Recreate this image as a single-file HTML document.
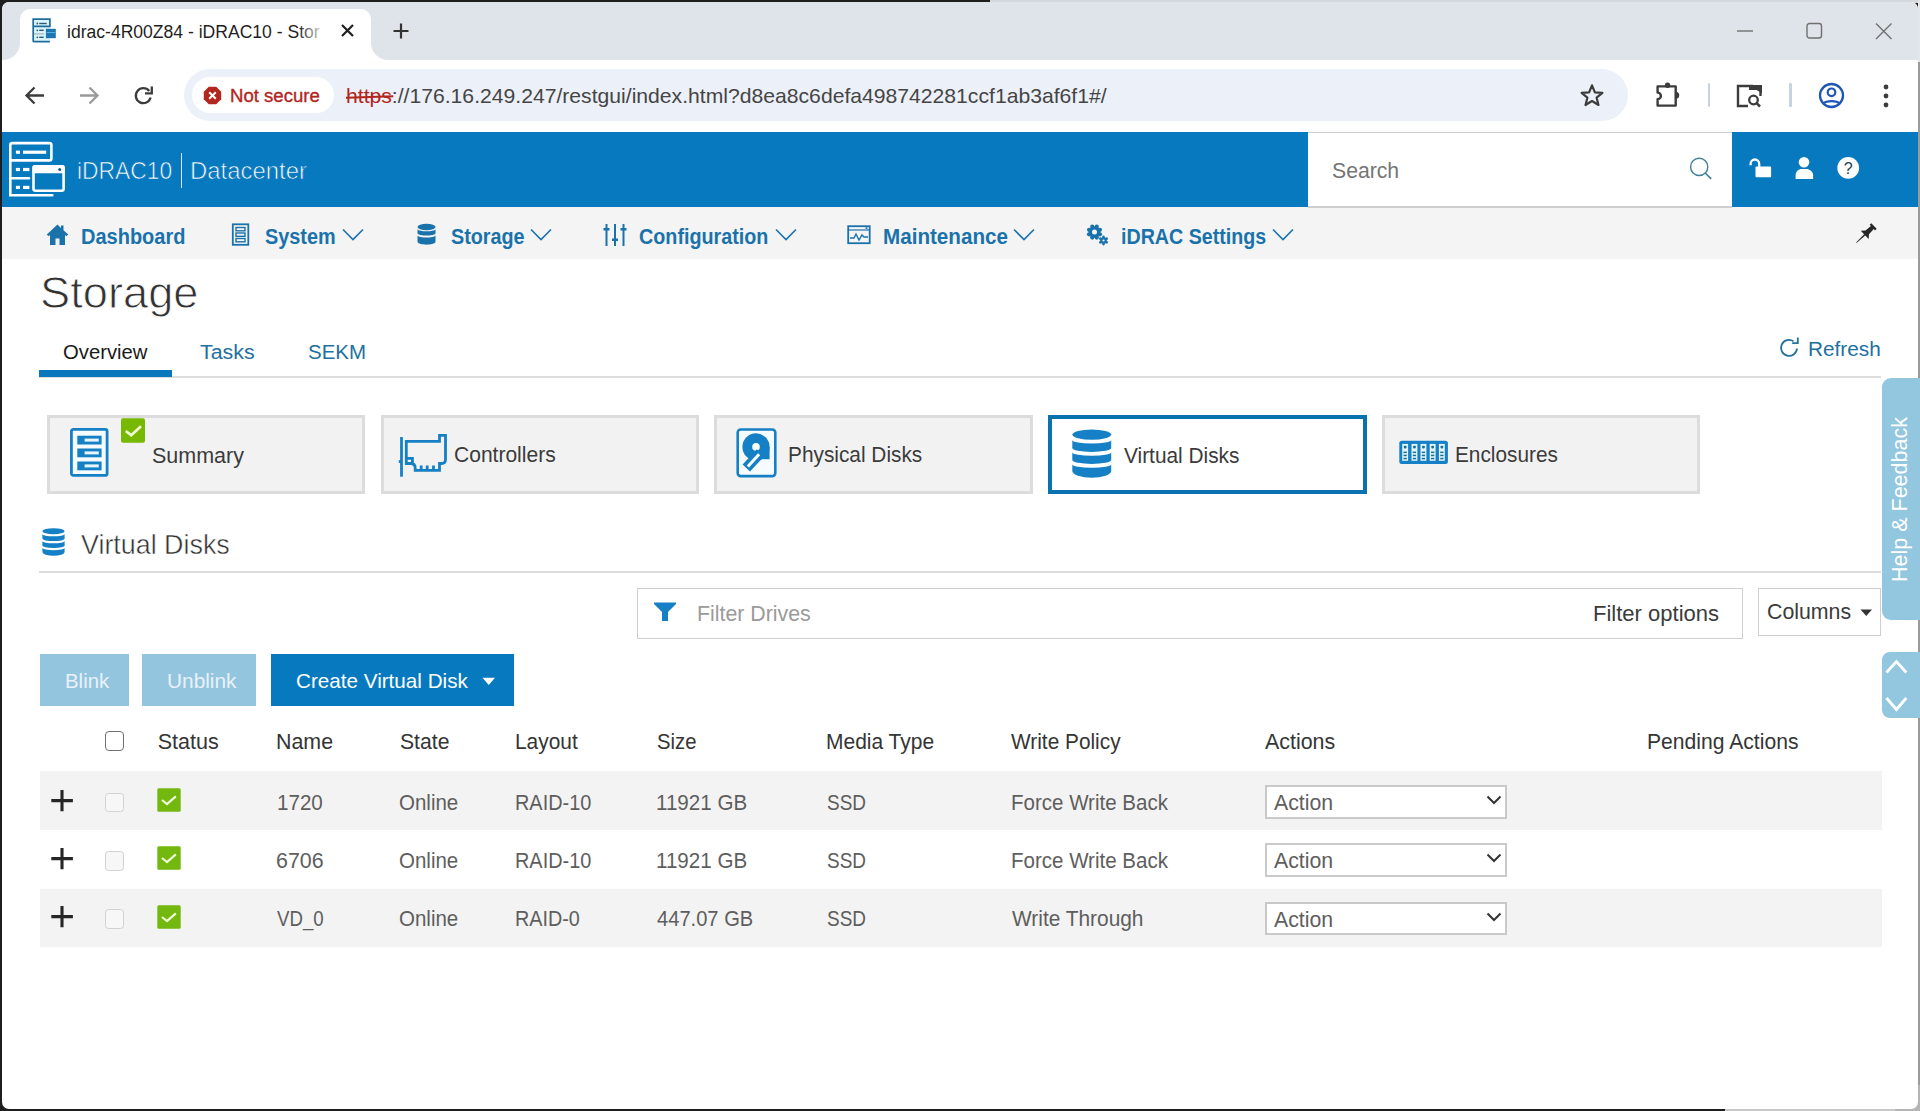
<!DOCTYPE html>
<html><head><meta charset="utf-8">
<style>
*{box-sizing:border-box;margin:0;padding:0}
html,body{width:1920px;height:1111px;overflow:hidden;background:#2a2a2a;font-family:"Liberation Sans",sans-serif}
.a{position:absolute}
.t{position:absolute;white-space:pre;transform-origin:0 0;font-family:"Liberation Sans",sans-serif}
svg{position:absolute;overflow:visible}
</style></head><body>
<!-- desktop bg -->
<div class="a" style="left:0;top:0;width:1920px;height:1111px;background:#1e1e1e"></div>
<div class="a" style="left:990px;top:0;width:930px;height:3px;background:#d5d8dd"></div>
<div class="a" style="left:1918px;top:0;width:2px;height:62px;background:#e4e6ea"></div>
<div class="a" style="left:1918px;top:62px;width:2px;height:1049px;background:#9a9a9a"></div>
<div class="a" style="left:1725px;top:1109px;width:195px;height:2px;background:#c8c8c8"></div>
<div class="a" style="left:1895px;top:1085px;width:25px;height:26px;background:#b4b4b4"></div>
<!-- window -->
<div class="a" style="left:2px;top:2px;width:1916px;height:1107px;background:#fff;border-radius:7px;overflow:hidden">
  <div class="a" style="left:0;top:0;width:1916px;height:58px;background:#dfe3ea"></div>
</div>
<!-- tab -->
<svg style="left:0;top:0" width="400" height="62" viewBox="0 0 400 62"><path d="M3 60A17 17 0 0 0 20 43V19A10 10 0 0 1 30 9H361A10 10 0 0 1 371 19V43A17 17 0 0 0 388 60Z" fill="#fff"/></svg>
<div class="a" style="left:298px;top:18px;width:34px;height:30px;z-index:5;background:linear-gradient(90deg,rgba(255,255,255,0) 0%,rgba(255,255,255,0.55) 45%,#fff 100%)"></div>
<!-- favicon -->
<svg style="left:28px;top:14px" width="32" height="32" viewBox="0 0 32 32">
  <rect x="5" y="5" width="17" height="22.6" fill="#dcf3fa"/>
  <path d="M5.2 27.7V5.2H21.9V12.4H5.2M5.2 27.7H21.9" fill="none" stroke="#1c6d9c" stroke-width="1.7"/>
  <path d="M6 19.9H16" stroke="#9cb7c2" stroke-width="1.2"/>
  <g fill="#2b5c72"><circle cx="9.3" cy="9.5" r="0.9"/><rect x="11.2" y="8.8" width="7.5" height="1.4"/><circle cx="9.3" cy="16.3" r="0.9"/><rect x="11.2" y="15.6" width="4.5" height="1.4"/><circle cx="9.3" cy="23.3" r="0.9"/><rect x="11.2" y="22.6" width="4.5" height="1.4"/></g>
  <rect x="17.9" y="14.8" width="9.9" height="9.4" fill="#1a78b5"/><rect x="18.5" y="18" width="8.7" height="0.9" fill="#62b8e0"/>
</svg>
<!-- tab close & new tab -->
<svg style="left:340px;top:23px" width="15" height="15" viewBox="0 0 15 15"><path d="M2 2L13 13M13 2L2 13" stroke="#1f1f1f" stroke-width="2.2"/></svg>
<svg style="left:392px;top:22px" width="18" height="18" viewBox="0 0 18 18"><path d="M9 1.5V16.5M1.5 9H16.5" stroke="#333" stroke-width="2.2"/></svg>
<!-- window controls -->
<svg style="left:1736px;top:22px" width="20" height="20" viewBox="0 0 20 20"><path d="M1 9H17" stroke="#707070" stroke-width="1.4"/></svg>
<svg style="left:1806px;top:22px" width="18" height="18" viewBox="0 0 18 18"><rect x="1" y="1.5" width="14.5" height="14.5" rx="2.5" fill="none" stroke="#707070" stroke-width="1.4"/></svg>
<svg style="left:1875px;top:22px" width="18" height="18" viewBox="0 0 18 18"><path d="M1 1.5L16.5 17M16.5 1.5L1 17" stroke="#707070" stroke-width="1.4"/></svg>
<!-- toolbar -->
<svg style="left:24px;top:85px" width="22" height="21" viewBox="0 0 22 21"><path d="M20 10.5H3M10.5 2.5L2.5 10.5L10.5 18.5" fill="none" stroke="#3c3c3c" stroke-width="2.3"/></svg>
<svg style="left:78px;top:85px" width="22" height="21" viewBox="0 0 22 21"><path d="M2 10.5H19M11.5 2.5L19.5 10.5L11.5 18.5" fill="none" stroke="#9a9a9a" stroke-width="2.3"/></svg>
<svg style="left:133px;top:85px" width="22" height="22" viewBox="0 0 22 22"><path d="M17.6 12.5A7.5 7.5 0 1 1 16.2 6" fill="none" stroke="#3c3c3c" stroke-width="2.3"/><path d="M18.8 1.5V8.3H12" fill="none" stroke="#3c3c3c" stroke-width="2.3"/></svg>
<div class="a" style="left:184px;top:69px;width:1444px;height:52px;background:#ecf0f8;border-radius:26px"></div>
<div class="a" style="left:192px;top:77px;width:142px;height:36px;background:#fff;border-radius:18px"></div>
<svg style="left:203px;top:86px" width="19" height="19" viewBox="0 0 19 19"><path d="M5.8 0.8H13.2L18.2 5.8V13.2L13.2 18.2H5.8L0.8 13.2V5.8Z" fill="#b3261e"/><path d="M6.2 6.2L12.8 12.8M12.8 6.2L6.2 12.8" stroke="#fff" stroke-width="2"/></svg>
<div class="t" style="left:346px;top:85px;font-size:21px;line-height:21px;color:#454545;transform:scaleX(1.0068);"><span style="color:#b3261e;position:relative">https<span style="position:absolute;left:0px;right:-1px;top:12px;height:1.6px;background:#b3261e;transform:rotate(-2deg)"></span></span>://176.16.249.247/restgui/index.html?d8ea8c6defa498742281ccf1ab3af6f1#/</div>
<svg style="left:1579px;top:83px" width="26" height="25" viewBox="0 0 26 25"><path d="M13 2.3L15.9 9.4L23.4 9.9L17.6 14.7L19.5 22L13 18L6.5 22L8.4 14.7L2.6 9.9L10.1 9.4Z" fill="none" stroke="#3c3c3c" stroke-width="2.2" stroke-linejoin="round"/></svg>
<svg style="left:1654px;top:80px" width="30" height="30" viewBox="0 0 30 30"><path d="M3.6 6.4H21.7V25.6H3.6V19.2A3.3 3.3 0 0 0 3.6 12.6Z" fill="none" stroke="#3c3c3c" stroke-width="2.4" stroke-linejoin="round"/><circle cx="13.6" cy="5.2" r="2.7" fill="#3c3c3c"/><path d="M21.7 12.5A2.8 2.8 0 0 1 21.7 18.1Z" fill="#3c3c3c" stroke="#3c3c3c" stroke-width="1.5"/></svg>
<div class="a" style="left:1707.5px;top:83px;width:2.5px;height:24px;background:#c8d3e2;border-radius:1px"></div>
<svg style="left:1735px;top:84px" width="30" height="25" viewBox="0 0 30 25"><path d="M18 2H3V22H13" fill="none" stroke="#3c3c3c" stroke-width="2.4"/><path d="M14 1.5H26.5V9" fill="#3c3c3c" stroke="#3c3c3c" stroke-width="1"/><rect x="14" y="1" width="13" height="5" fill="#3c3c3c"/><line x1="25.5" y1="7" x2="25.5" y2="12" stroke="#3c3c3c" stroke-width="2.4"/><circle cx="18.5" cy="16" r="4.3" fill="none" stroke="#3c3c3c" stroke-width="2.3"/><path d="M21.6 19.1L25 22.5" stroke="#3c3c3c" stroke-width="2.5"/></svg>
<div class="a" style="left:1789px;top:83px;width:2.5px;height:24px;background:#c8d3e2;border-radius:1px"></div>
<svg style="left:1818px;top:82px" width="27" height="27" viewBox="0 0 27 27"><circle cx="13.5" cy="13.5" r="11.5" fill="none" stroke="#1f57b5" stroke-width="2.3"/><circle cx="13.5" cy="10.3" r="3.8" fill="none" stroke="#1f57b5" stroke-width="2.2"/><path d="M5.8 21.5C8 18.3 19 18.3 21.2 21.5" fill="none" stroke="#1f57b5" stroke-width="2.2"/></svg>
<svg style="left:1880px;top:83px" width="12" height="26" viewBox="0 0 12 26"><circle cx="6" cy="4" r="2.4" fill="#3c3c3c"/><circle cx="6" cy="13" r="2.4" fill="#3c3c3c"/><circle cx="6" cy="22" r="2.4" fill="#3c3c3c"/></svg>

<!-- iDRAC header -->
<div class="a" style="left:2px;top:132px;width:1916px;height:75px;background:#0779bf"></div>
<div class="a" style="left:1308px;top:131.5px;width:424px;height:76px;background:#fff;border-top:1.5px solid #cfcfcf;border-bottom:1.5px solid #cfcfcf"></div>
<svg style="left:8px;top:140px" width="60" height="60" viewBox="0 0 60 60">
  <g fill="none" stroke="#fff" stroke-width="2.6" stroke-linecap="round">
    <rect x="2.3" y="3.1" width="41.1" height="17.3" rx="2"/>
    <path d="M2.3 20V55.2H44.3"/>
    <path d="M2.3 38.2H21"/>
    <rect x="25.5" y="26.4" width="30.1" height="24.3" rx="2"/>
  </g>
  <g fill="#fff">
    <rect x="7.9" y="10.6" width="4.1" height="3.2"/><rect x="15" y="10.6" width="23.2" height="3.2"/>
    <rect x="7.9" y="27.9" width="4.1" height="3.2"/><rect x="15" y="27.9" width="6.4" height="3.2"/>
    <rect x="7.9" y="45.8" width="4.1" height="3.2"/><rect x="15" y="45.8" width="6.4" height="3.2"/>
    <rect x="24.5" y="25.2" width="32.2" height="8.1" rx="1.5"/>
  </g>
  <circle cx="51.7" cy="29.4" r="1.5" fill="#16608c"/>
</svg>
<div class="a" style="left:180.5px;top:153px;width:1.5px;height:35px;background:#d6e8f4"></div>
<svg style="left:1680px;top:145px" width="200" height="50" viewBox="0 0 200 50">
<circle cx="19.2" cy="21.9" r="8.6" fill="none" stroke="#3f7f97" stroke-width="1.4"/><path d="M25.3 28L31.2 33.9" stroke="#3f7f97" stroke-width="1.6"/>
<path d="M70.6 20.2V18.8A4.3 4.3 0 0 1 79.2 18.8V22" fill="none" stroke="#fff" stroke-width="2.3"/><rect x="75.5" y="21.4" width="15.6" height="10.9" rx="1" fill="#fff"/>
<circle cx="124" cy="17.2" r="5.3" fill="#fff"/><path d="M115.6 33.9V30.5C115.6 26.5 118.5 24 121.5 24H126.5C129.5 24 133.1 26.5 133.1 30.5V33.9Z" fill="#fff"/>
<circle cx="168.2" cy="22.9" r="10.9" fill="#fff"/><text x="168.2" y="29" text-anchor="middle" font-family="Liberation Sans" font-size="16" fill="#243c55">?</text>
</svg>
<!-- nav -->
<div class="a" style="left:2px;top:207px;width:1916px;height:52px;background:#f4f4f4"></div>
<div class="a" style="left:1308px;top:206px;width:424px;height:1.5px;background:#cfcfcf"></div>
<svg style="left:46px;top:223px" width="23" height="23" viewBox="0 0 23 23"><path d="M11.5 1.5L0.8 11.5L2.5 13.2L4 11.9V22H9.5V15.5H13.5V22H19V11.9L20.5 13.2L22.2 11.5L17.5 7.2V2.5H15V4.9Z" fill="#1a72ab"/></svg>
<svg style="left:231px;top:223px" width="20" height="23" viewBox="0 0 20 23"><rect x="1.8" y="1.3" width="15.5" height="20.5" fill="none" stroke="#1a72ab" stroke-width="1.8"/><rect x="5" y="4.5" width="9" height="3.3" fill="none" stroke="#1a72ab" stroke-width="1.4"/><rect x="5" y="10" width="9" height="3.3" fill="none" stroke="#1a72ab" stroke-width="1.4"/><rect x="5" y="15.5" width="9" height="3.3" fill="none" stroke="#1a72ab" stroke-width="1.4"/></svg>
<svg style="left:416px;top:223px" width="21" height="23" viewBox="0 0 21 23"><g fill="#1a72ab"><ellipse cx="10.5" cy="4" rx="9" ry="3.3"/><path d="M1.5 6.3C3 9 18 9 19.5 6.3V10.5C18 13.3 3 13.3 1.5 10.5Z"/><path d="M1.5 12.5C3 15.3 18 15.3 19.5 12.5V19C18 22.5 3 22.5 1.5 19Z"/></g></svg>
<svg style="left:603px;top:223px" width="24" height="24" viewBox="0 0 24 24"><g stroke="#1a72ab" stroke-width="2" fill="#1a72ab"><path d="M3.5 1V23M12 1V23M20.5 1V23" fill="none"/><rect x="0.5" y="5" width="6" height="2.5" stroke="none"/><rect x="9" y="15.5" width="6" height="2.5" stroke="none"/><rect x="17.5" y="5" width="6" height="2.5" stroke="none"/></g></svg>
<svg style="left:847px;top:225px" width="24" height="20" viewBox="0 0 24 20"><rect x="1.2" y="1.2" width="21.5" height="17" fill="none" stroke="#1a72ab" stroke-width="1.8"/><path d="M1.2 5H22.7" stroke="#1a72ab" stroke-width="1.2"/><path d="M3 13L7 13L9 9L12 15L15 10L17 12L21 12" fill="none" stroke="#1a72ab" stroke-width="1.4"/><rect x="18.5" y="2.3" width="2" height="1.6" fill="#1a72ab"/></svg>
<svg style="left:1086px;top:223px" width="24" height="24" viewBox="0 0 24 24"><g fill="#1a72ab"><circle cx="8.5" cy="9.1" r="5.9"/><circle cx="13.95" cy="11.36" r="2.1"/><circle cx="10.76" cy="14.55" r="2.1"/><circle cx="6.24" cy="14.55" r="2.1"/><circle cx="3.05" cy="11.36" r="2.1"/><circle cx="3.05" cy="6.84" r="2.1"/><circle cx="6.24" cy="3.65" r="2.1"/><circle cx="10.76" cy="3.65" r="2.1"/><circle cx="13.95" cy="6.84" r="2.1"/><circle cx="17.5" cy="17.5" r="3.3"/><circle cx="20.62" cy="19.30" r="1.35"/><circle cx="17.50" cy="21.10" r="1.35"/><circle cx="14.38" cy="19.30" r="1.35"/><circle cx="14.38" cy="15.70" r="1.35"/><circle cx="17.50" cy="13.90" r="1.35"/><circle cx="20.62" cy="15.70" r="1.35"/></g><circle cx="8.5" cy="9.1" r="2.5" fill="#f4f4f4"/><circle cx="17.5" cy="17.5" r="1.1" fill="#f4f4f4"/></svg>
<svg style="left:342px;top:228px" width="22" height="13" viewBox="0 0 22 13"><path d="M1 1.5L11 11.5L21 1.5" fill="none" stroke="#1a72ab" stroke-width="1.6"/></svg>
<svg style="left:530px;top:228px" width="22" height="13" viewBox="0 0 22 13"><path d="M1 1.5L11 11.5L21 1.5" fill="none" stroke="#1a72ab" stroke-width="1.6"/></svg>
<svg style="left:775px;top:228px" width="22" height="13" viewBox="0 0 22 13"><path d="M1 1.5L11 11.5L21 1.5" fill="none" stroke="#1a72ab" stroke-width="1.6"/></svg>
<svg style="left:1012.5px;top:228px" width="22" height="13" viewBox="0 0 22 13"><path d="M1 1.5L11 11.5L21 1.5" fill="none" stroke="#1a72ab" stroke-width="1.6"/></svg>
<svg style="left:1272px;top:228px" width="22" height="13" viewBox="0 0 22 13"><path d="M1 1.5L11 11.5L21 1.5" fill="none" stroke="#1a72ab" stroke-width="1.6"/></svg>
<svg style="left:1845px;top:210px" width="40" height="40" viewBox="0 0 40 40"><g transform="translate(29 16) rotate(46.5)" fill="#262626"><path d="M-3.9 0H3.9V2.3H2.1L2.5 9.3L5.7 12.8H-5.7L-2.5 9.3L-2.1 2.3H-3.9Z"/><path d="M-0.85 12.5H0.85L0.25 24.4H-0.25Z"/></g></svg>

<!-- page header -->
<div class="a" style="left:39px;top:376px;width:1842px;height:1.5px;background:#dcdcdc"></div>
<div class="a" style="left:39px;top:370px;width:133px;height:7px;background:#0a76bb"></div>
<svg style="left:1778px;top:337px" width="22" height="20" viewBox="0 0 22 20"><path d="M19 11.5A8 8 0 1 1 15.5 4.3" fill="none" stroke="#22709f" stroke-width="1.8"/><path d="M19.8 0.6V6.2H14.2" fill="none" stroke="#22709f" stroke-width="1.8"/></svg>

<!-- cards -->
<div class="a" style="left:47px;top:415px;width:318px;height:79px;background:#f2f2f2;border:3px solid #dcdcdc"></div>
<div class="a" style="left:380.5px;top:415px;width:318px;height:79px;background:#f2f2f2;border:3px solid #dcdcdc"></div>
<div class="a" style="left:713.5px;top:415px;width:319px;height:79px;background:#f2f2f2;border:3px solid #dcdcdc"></div>
<div class="a" style="left:1047.5px;top:415px;width:319px;height:79px;background:#fff;border:4.6px solid #0b72b0"></div>
<div class="a" style="left:1381.5px;top:415px;width:318px;height:79px;background:#f2f2f2;border:3px solid #dcdcdc"></div>
<!-- summary icon -->
<svg style="left:70px;top:427.5px" width="39" height="49" viewBox="0 0 39 49"><rect x="1.4" y="1.4" width="35.7" height="46" rx="2" fill="#f6fbfd" stroke="#1580c5" stroke-width="2.8"/><g fill="#1580c5"><rect x="7.3" y="7.7" width="24.3" height="8.8"/><rect x="7.3" y="20.5" width="24.3" height="8.8"/><rect x="7.3" y="33.5" width="24.3" height="8.8"/></g><g fill="#e6f6fc"><rect x="14.6" y="10.6" width="14.2" height="3"/><rect x="14.6" y="23.4" width="14.2" height="3"/><rect x="14.6" y="36.4" width="14.2" height="3"/></g></svg>
<svg style="left:121px;top:418px" width="24" height="25" viewBox="0 0 24 25"><rect x="0" y="0.2" width="24" height="24.5" rx="2" fill="#76b900"/><path d="M4.8 13L10.2 17.2L20 8.3" fill="none" stroke="#f4ffd8" stroke-width="2.6"/></svg>
<!-- controllers icon -->
<svg style="left:395px;top:430px" width="56" height="50" viewBox="0 0 56 50"><g fill="none" stroke="#1580c5" stroke-width="2.8"><path d="M6.5 7V46.7"/><path d="M3.8 31.6H6.5"/><path d="M11.3 11.4H44.5V5.4H50.5V29.5Q50.5 33.5 46.5 33.5H44.5V40.4H20.2V38Q20.2 33.5 15.7 33.5H11.3Z"/><path d="M11.3 28.4H17.4V33.5"/><path d="M26.2 35.5V40.4M32.2 35.5V40.4M38.5 35.5V40.4"/></g></svg>
<!-- physical disk icon -->
<svg style="left:735px;top:427px" width="42" height="51" viewBox="0 0 42 51"><rect x="2.7" y="2.5" width="37.6" height="46.6" rx="3" fill="#f6fbfd" stroke="#1580c5" stroke-width="2.6"/><g fill="#1580c5"><circle cx="21" cy="19.9" r="13.6"/><rect x="21" y="19.9" width="13.6" height="12.3"/></g><circle cx="21" cy="19.9" r="3.8" fill="#f6fbfd"/><g transform="translate(11.3 41.1) rotate(-47)"><rect x="0" y="-5.1" width="21" height="10.2" fill="#1580c5"/><rect x="2.3" y="-1.5" width="16.5" height="3" fill="#f6fbfd"/></g></svg>
<!-- virtual disk icon (card) -->
<svg style="left:1072px;top:429px" width="40" height="50" viewBox="0 0 40 50"><g fill="#1580c5"><ellipse cx="19.75" cy="5.6" rx="19.4" ry="5.2"/><path d="M0.3 10.9A19.45 3.6 0 0 0 39.2 10.9V19A19.45 3.9 0 0 1 0.3 19Z"/><path d="M0.3 23.2A19.45 3.6 0 0 0 39.2 23.2V31A19.45 3.9 0 0 1 0.3 31Z"/><path d="M0.3 35.2A19.45 3.6 0 0 0 39.2 35.2V41.9A19.45 6.8 0 0 1 0.3 41.9Z"/></g></svg>
<!-- enclosure icon -->
<svg style="left:1398px;top:440px" width="51" height="25" viewBox="0 0 51 25"><rect x="1.3" y="0.8" width="48.6" height="23.1" rx="2.5" fill="#1580c5"/><rect x="4.2" y="3.9" width="5.9" height="16.9" fill="#e2f4fb"/><rect x="5.800000000000001" y="5.8" width="2.7" height="2.6" rx="0.8" fill="#1b6f90"/><rect x="5.5" y="11.6" width="3.3" height="1.5" fill="#1b6f90"/><rect x="5.5" y="14.7" width="3.3" height="1.5" fill="#1b6f90"/><rect x="5.5" y="17.8" width="3.3" height="1.5" fill="#1b6f90"/><rect x="13.5" y="3.9" width="5.9" height="16.9" fill="#e2f4fb"/><rect x="15.1" y="5.8" width="2.7" height="2.6" rx="0.8" fill="#1b6f90"/><rect x="14.8" y="11.6" width="3.3" height="1.5" fill="#1b6f90"/><rect x="14.8" y="14.7" width="3.3" height="1.5" fill="#1b6f90"/><rect x="14.8" y="17.8" width="3.3" height="1.5" fill="#1b6f90"/><rect x="22.5" y="3.9" width="5.9" height="16.9" fill="#e2f4fb"/><rect x="24.1" y="5.8" width="2.7" height="2.6" rx="0.8" fill="#1b6f90"/><rect x="23.8" y="11.6" width="3.3" height="1.5" fill="#1b6f90"/><rect x="23.8" y="14.7" width="3.3" height="1.5" fill="#1b6f90"/><rect x="23.8" y="17.8" width="3.3" height="1.5" fill="#1b6f90"/><rect x="31.7" y="3.9" width="5.9" height="16.9" fill="#e2f4fb"/><rect x="33.3" y="5.8" width="2.7" height="2.6" rx="0.8" fill="#1b6f90"/><rect x="33.0" y="11.6" width="3.3" height="1.5" fill="#1b6f90"/><rect x="33.0" y="14.7" width="3.3" height="1.5" fill="#1b6f90"/><rect x="33.0" y="17.8" width="3.3" height="1.5" fill="#1b6f90"/><rect x="40.9" y="3.9" width="5.9" height="16.9" fill="#e2f4fb"/><rect x="42.5" y="5.8" width="2.7" height="2.6" rx="0.8" fill="#1b6f90"/><rect x="42.199999999999996" y="11.6" width="3.3" height="1.5" fill="#1b6f90"/><rect x="42.199999999999996" y="14.7" width="3.3" height="1.5" fill="#1b6f90"/><rect x="42.199999999999996" y="17.8" width="3.3" height="1.5" fill="#1b6f90"/></svg>

<!-- section header -->
<svg style="left:41.9px;top:528px" width="23" height="28" viewBox="0 0 39.5 49"><g fill="#1580c5"><ellipse cx="19.75" cy="5.6" rx="19.4" ry="5.2"/><path d="M0.3 10.9A19.45 3.6 0 0 0 39.2 10.9V19A19.45 3.9 0 0 1 0.3 19Z"/><path d="M0.3 23.2A19.45 3.6 0 0 0 39.2 23.2V31A19.45 3.9 0 0 1 0.3 31Z"/><path d="M0.3 35.2A19.45 3.6 0 0 0 39.2 35.2V41.9A19.45 6.8 0 0 1 0.3 41.9Z"/></g></svg>
<div class="a" style="left:39px;top:571px;width:1842px;height:1.5px;background:#dcdcdc"></div>

<!-- filter -->
<div class="a" style="left:637px;top:587.5px;width:1105.5px;height:51px;background:#fff;border:1.5px solid #cfcfcf"></div>
<svg style="left:653px;top:601px" width="24" height="21" viewBox="0 0 24 21"><path d="M1 1.5H23V3L15 11V20H9V11L1 3Z" fill="#1580c5"/></svg>
<div class="a" style="left:1758px;top:588px;width:123px;height:47.5px;background:#fff;border:1.5px solid #cfcfcf"></div>
<svg style="left:1860px;top:609px" width="13" height="8" viewBox="0 0 13 8"><path d="M0.5 0.5H12L6.25 7Z" fill="#333"/></svg>

<!-- buttons -->
<div class="a" style="left:39.5px;top:654px;width:89px;height:51.5px;background:#93c5df"></div>
<div class="a" style="left:142px;top:654px;width:113.5px;height:51.5px;background:#93c5df"></div>
<div class="a" style="left:270.5px;top:654px;width:243.5px;height:51.5px;background:#0779bf"></div>
<svg style="left:482px;top:677px" width="14" height="9" viewBox="0 0 14 9"><path d="M0.5 0.8H13L6.75 8Z" fill="#fff"/></svg>

<!-- table -->
<div class="a" style="left:104.5px;top:731px;width:19.6px;height:19.8px;border:1.7px solid #707070;border-radius:4px;background:#fff"></div>
<div class="a" style="left:39.5px;top:770.5px;width:1842px;height:59.5px;background:#f3f3f3"></div>
<div class="a" style="left:39.5px;top:888.5px;width:1842px;height:58px;background:#f3f3f3"></div>
<!-- row widgets -->
<div id="rows"></div>
<svg style="left:51px;top:789.6px" width="23" height="23" viewBox="0 0 23 23"><path d="M11 0V21.3M0.3 10.6H21.9" stroke="#262626" stroke-width="3.1"/></svg>
<div class="a" style="left:104.5px;top:792.7px;width:19.5px;height:19.5px;border:1.6px solid #d2d2d2;border-radius:3.5px;background:#f7f7f7"></div>
<svg style="left:157px;top:788.0px" width="24" height="24" viewBox="0 0 24 24"><rect x="0.3" y="0.3" width="23.4" height="23.4" rx="1.5" fill="#72b80e"/><path d="M5 12L10 16L18.8 8.3" fill="none" stroke="#f0ffd8" stroke-width="2.2"/></svg>
<div class="a" style="left:1265px;top:785.0px;width:242px;height:33.5px;border:2px solid #c9c9c9;background:#fff"></div>
<svg style="left:1486px;top:795.0px" width="16" height="10" viewBox="0 0 16 10"><path d="M1.5 1.5L8 8L14.5 1.5" fill="none" stroke="#333" stroke-width="2"/></svg>
<svg style="left:51px;top:847.9px" width="23" height="23" viewBox="0 0 23 23"><path d="M11 0V21.3M0.3 10.6H21.9" stroke="#262626" stroke-width="3.1"/></svg>
<div class="a" style="left:104.5px;top:851.0px;width:19.5px;height:19.5px;border:1.6px solid #d2d2d2;border-radius:3.5px;background:#f7f7f7"></div>
<svg style="left:157px;top:846.3px" width="24" height="24" viewBox="0 0 24 24"><rect x="0.3" y="0.3" width="23.4" height="23.4" rx="1.5" fill="#72b80e"/><path d="M5 12L10 16L18.8 8.3" fill="none" stroke="#f0ffd8" stroke-width="2.2"/></svg>
<div class="a" style="left:1265px;top:843.3px;width:242px;height:33.5px;border:2px solid #c9c9c9;background:#fff"></div>
<svg style="left:1486px;top:853.3px" width="16" height="10" viewBox="0 0 16 10"><path d="M1.5 1.5L8 8L14.5 1.5" fill="none" stroke="#333" stroke-width="2"/></svg>
<svg style="left:51px;top:906.3px" width="23" height="23" viewBox="0 0 23 23"><path d="M11 0V21.3M0.3 10.6H21.9" stroke="#262626" stroke-width="3.1"/></svg>
<div class="a" style="left:104.5px;top:909.4px;width:19.5px;height:19.5px;border:1.6px solid #d2d2d2;border-radius:3.5px;background:#f7f7f7"></div>
<svg style="left:157px;top:904.7px" width="24" height="24" viewBox="0 0 24 24"><rect x="0.3" y="0.3" width="23.4" height="23.4" rx="1.5" fill="#72b80e"/><path d="M5 12L10 16L18.8 8.3" fill="none" stroke="#f0ffd8" stroke-width="2.2"/></svg>
<div class="a" style="left:1265px;top:901.7px;width:242px;height:33.5px;border:2px solid #c9c9c9;background:#fff"></div>
<svg style="left:1486px;top:911.7px" width="16" height="10" viewBox="0 0 16 10"><path d="M1.5 1.5L8 8L14.5 1.5" fill="none" stroke="#333" stroke-width="2"/></svg>

<!-- help & feedback -->
<div class="a" style="left:1881.5px;top:378px;width:40px;height:242px;background:#93c6df;border-radius:9px 0 0 9px"></div>
<div class="t" style="left:1889.5px;top:582px;font-size:21.5px;line-height:21.5px;color:#fff;transform:rotate(-90deg) scaleX(1.0);">Help &amp; Feedback</div>
<div class="a" style="left:1881.5px;top:652px;width:40px;height:66.3px;background:#93c6df;border-radius:8px 0 0 8px"></div>
<svg style="left:1880px;top:655px" width="30" height="60" viewBox="0 0 30 60"><path d="M6.5 17.5L16.4 6.5L26.3 17.5M6.5 43L16.4 54.5L26.3 43" fill="none" stroke="#fff" stroke-width="2.8"/></svg>
<!-- right window edge -->


<div class="t" style="left:67.32px;top:22.76px;font-size:18px;line-height:18px;color:#1f1f1f;transform:scaleX(0.9752);">idrac-4R00Z84 - iDRAC10 - Stor</div>
<div class="t" style="left:229.94px;top:88.39px;font-size:17.5px;line-height:17.5px;color:#b3261e;transform:scaleX(1.0617);-webkit-text-stroke:0.35px #b3261e;">Not secure</div>
<div class="t" style="left:77.05px;top:158.68px;font-size:24px;line-height:24px;color:#ffffff;transform:scaleX(0.9525);-webkit-text-stroke:0.7px #0779bf;">iDRAC10</div>
<div class="t" style="left:190.00px;top:158.68px;font-size:24px;line-height:24px;color:#ffffff;transform:scaleX(0.9965);-webkit-text-stroke:0.7px #0779bf;">Datacenter</div>
<div class="t" style="left:1331.74px;top:159.68px;font-size:22px;line-height:22px;color:#757575;transform:scaleX(0.9634);">Search</div>
<div class="t" style="left:81.09px;top:225.78px;font-size:22px;line-height:22px;color:#1a72ab;font-weight:700;transform:scaleX(0.9087);">Dashboard</div>
<div class="t" style="left:265.00px;top:225.78px;font-size:22px;line-height:22px;color:#1a72ab;font-weight:700;transform:scaleX(0.9034);">System</div>
<div class="t" style="left:450.60px;top:225.78px;font-size:22px;line-height:22px;color:#1a72ab;font-weight:700;transform:scaleX(0.8987);">Storage</div>
<div class="t" style="left:639.00px;top:225.78px;font-size:22px;line-height:22px;color:#1a72ab;font-weight:700;transform:scaleX(0.8974);">Configuration</div>
<div class="t" style="left:882.56px;top:225.78px;font-size:22px;line-height:22px;color:#1a72ab;font-weight:700;transform:scaleX(0.9377);">Maintenance</div>
<div class="t" style="left:1121.11px;top:225.78px;font-size:22px;line-height:22px;color:#1a72ab;font-weight:700;transform:scaleX(0.8926);">iDRAC Settings</div>
<div class="t" style="left:39.59px;top:270.41px;font-size:45px;line-height:45px;color:#333333;transform:scaleX(1.0053);-webkit-text-stroke:0.9px #fff;">Storage</div>
<div class="t" style="left:62.80px;top:343.09px;font-size:19.5px;line-height:19.5px;color:#1a1a1a;transform:scaleX(1.0391);">Overview</div>
<div class="t" style="left:199.80px;top:343.29px;font-size:19.5px;line-height:19.5px;color:#22709f;transform:scaleX(1.0959);">Tasks</div>
<div class="t" style="left:307.60px;top:343.29px;font-size:19.5px;line-height:19.5px;color:#22709f;transform:scaleX(1.0496);">SEKM</div>
<div class="t" style="left:1807.91px;top:338.22px;font-size:21px;line-height:21px;color:#22709f;transform:scaleX(0.9895);">Refresh</div>
<div class="t" style="left:152.02px;top:444.68px;font-size:22px;line-height:22px;color:#3b3b3b;transform:scaleX(0.9772);">Summary</div>
<div class="t" style="left:454.04px;top:444.38px;font-size:22px;line-height:22px;color:#3b3b3b;transform:scaleX(0.9557);">Controllers</div>
<div class="t" style="left:787.75px;top:443.58px;font-size:22px;line-height:22px;color:#3b3b3b;transform:scaleX(0.9467);">Physical Disks</div>
<div class="t" style="left:1124.40px;top:445.38px;font-size:22px;line-height:22px;color:#3b3b3b;transform:scaleX(0.9471);">Virtual Disks</div>
<div class="t" style="left:1455.35px;top:443.58px;font-size:22px;line-height:22px;color:#3b3b3b;transform:scaleX(0.9450);">Enclosures</div>
<div class="t" style="left:81.30px;top:529.87px;font-size:28.5px;line-height:28.5px;color:#303030;transform:scaleX(0.9423);-webkit-text-stroke:0.5px #fff;">Virtual Disks</div>
<div class="t" style="left:696.51px;top:603.90px;font-size:21.5px;line-height:21.5px;color:#9a9a9a;transform:scaleX(0.9910);">Filter Drives</div>
<div class="t" style="left:1592.68px;top:603.60px;font-size:21.5px;line-height:21.5px;color:#3b3b3b;transform:scaleX(1.0245);">Filter options</div>
<div class="t" style="left:1767.31px;top:601.60px;font-size:21.5px;line-height:21.5px;color:#3b3b3b;transform:scaleX(0.9918);">Columns</div>
<div class="t" style="left:64.73px;top:669.62px;font-size:21px;line-height:21px;color:#e8f2f8;transform:scaleX(0.9707);">Blink</div>
<div class="t" style="left:167.01px;top:669.62px;font-size:21px;line-height:21px;color:#e8f2f8;transform:scaleX(0.9923);">Unblink</div>
<div class="t" style="left:296.02px;top:669.62px;font-size:21px;line-height:21px;color:#ffffff;transform:scaleX(0.9835);">Create Virtual Disk</div>
<div class="t" style="left:157.70px;top:731.60px;font-size:21.5px;line-height:21.5px;color:#353535;">Status</div>
<div class="t" style="left:276.21px;top:731.60px;font-size:21.5px;line-height:21.5px;color:#353535;transform:scaleX(0.9947);">Name</div>
<div class="t" style="left:399.80px;top:731.60px;font-size:21.5px;line-height:21.5px;color:#353535;transform:scaleX(0.9849);">State</div>
<div class="t" style="left:515.03px;top:731.60px;font-size:21.5px;line-height:21.5px;color:#353535;transform:scaleX(0.9720);">Layout</div>
<div class="t" style="left:656.50px;top:731.60px;font-size:21.5px;line-height:21.5px;color:#353535;transform:scaleX(0.9421);">Size</div>
<div class="t" style="left:826.02px;top:731.60px;font-size:21.5px;line-height:21.5px;color:#353535;transform:scaleX(0.9763);">Media Type</div>
<div class="t" style="left:1011.00px;top:731.60px;font-size:21.5px;line-height:21.5px;color:#353535;transform:scaleX(0.9687);">Write Policy</div>
<div class="t" style="left:1265.00px;top:731.60px;font-size:21.5px;line-height:21.5px;color:#353535;transform:scaleX(0.9963);">Actions</div>
<div class="t" style="left:1647.32px;top:731.60px;font-size:21.5px;line-height:21.5px;color:#353535;transform:scaleX(0.9822);">Pending Actions</div>
<div class="t" style="left:277.44px;top:792.60px;font-size:21.5px;line-height:21.5px;color:#5e5e5e;transform:scaleX(0.9579);">1720</div>
<div class="t" style="left:399.35px;top:792.60px;font-size:21.5px;line-height:21.5px;color:#5e5e5e;transform:scaleX(0.9536);">Online</div>
<div class="t" style="left:515.07px;top:792.60px;font-size:21.5px;line-height:21.5px;color:#5e5e5e;transform:scaleX(0.9253);">RAID-10</div>
<div class="t" style="left:656.44px;top:792.60px;font-size:21.5px;line-height:21.5px;color:#5e5e5e;transform:scaleX(0.9575);">11921 GB</div>
<div class="t" style="left:826.50px;top:792.60px;font-size:21.5px;line-height:21.5px;color:#5e5e5e;transform:scaleX(0.8814);">SSD</div>
<div class="t" style="left:1010.85px;top:792.60px;font-size:21.5px;line-height:21.5px;color:#5e5e5e;transform:scaleX(0.9541);">Force Write Back</div>
<div class="t" style="left:1273.50px;top:792.80px;font-size:21.5px;line-height:21.5px;color:#5e5e5e;transform:scaleX(0.9898);">Action</div>
<div class="t" style="left:276.30px;top:850.90px;font-size:21.5px;line-height:21.5px;color:#5e5e5e;transform:scaleX(0.9963);">6706</div>
<div class="t" style="left:399.35px;top:850.90px;font-size:21.5px;line-height:21.5px;color:#5e5e5e;transform:scaleX(0.9536);">Online</div>
<div class="t" style="left:515.07px;top:850.90px;font-size:21.5px;line-height:21.5px;color:#5e5e5e;transform:scaleX(0.9253);">RAID-10</div>
<div class="t" style="left:656.44px;top:850.90px;font-size:21.5px;line-height:21.5px;color:#5e5e5e;transform:scaleX(0.9575);">11921 GB</div>
<div class="t" style="left:826.50px;top:850.90px;font-size:21.5px;line-height:21.5px;color:#5e5e5e;transform:scaleX(0.8814);">SSD</div>
<div class="t" style="left:1010.85px;top:850.90px;font-size:21.5px;line-height:21.5px;color:#5e5e5e;transform:scaleX(0.9541);">Force Write Back</div>
<div class="t" style="left:1273.50px;top:851.10px;font-size:21.5px;line-height:21.5px;color:#5e5e5e;transform:scaleX(0.9898);">Action</div>
<div class="t" style="left:277.30px;top:909.30px;font-size:21.5px;line-height:21.5px;color:#5e5e5e;transform:scaleX(0.8676);">VD_0</div>
<div class="t" style="left:399.35px;top:909.30px;font-size:21.5px;line-height:21.5px;color:#5e5e5e;transform:scaleX(0.9536);">Online</div>
<div class="t" style="left:515.08px;top:909.30px;font-size:21.5px;line-height:21.5px;color:#5e5e5e;transform:scaleX(0.9205);">RAID-0</div>
<div class="t" style="left:657.40px;top:909.30px;font-size:21.5px;line-height:21.5px;color:#5e5e5e;transform:scaleX(0.9360);">447.07 GB</div>
<div class="t" style="left:826.50px;top:909.30px;font-size:21.5px;line-height:21.5px;color:#5e5e5e;transform:scaleX(0.8814);">SSD</div>
<div class="t" style="left:1011.80px;top:909.30px;font-size:21.5px;line-height:21.5px;color:#5e5e5e;transform:scaleX(0.9706);">Write Through</div>
<div class="t" style="left:1273.50px;top:909.50px;font-size:21.5px;line-height:21.5px;color:#5e5e5e;transform:scaleX(0.9898);">Action</div>
</body></html>
